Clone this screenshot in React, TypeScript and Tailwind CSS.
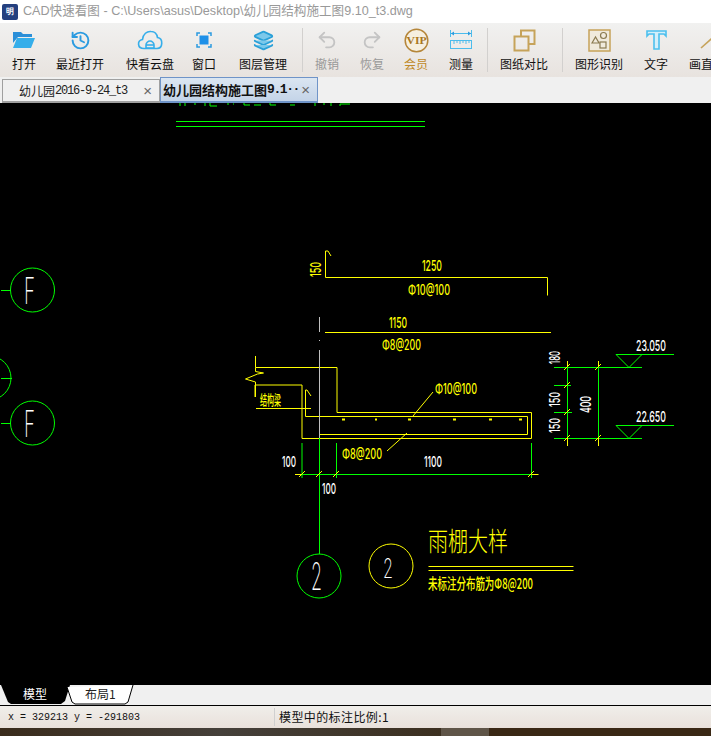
import React from 'react';
import { History, Layers, Undo2, Redo2 } from 'lucide-react';

const YELLOW = '#ffff00';
const GREEN = '#00ff00';
const GRAY = '#c0c0c0';

function FolderIcon() {
  return (
    <svg width="24" height="18" viewBox="0 0 24 18">
      <path d="M1 1h8l2 2h9v3H6L1 12z" fill="#2b8fd8" />
      <path d="M5 7h18l-4 10H1z" fill="#35aeea" />
    </svg>
  );
}

function CloudIcon() {
  return (
    <svg width="26" height="20" viewBox="0 0 26 20" fill="none" stroke="#35aeea" strokeWidth="1.6">
      <path d="M7 18.500c-7 0-7-8-1.500-9C6 4 10 1 14 1.500c4 0 6 3 6.500 6 6 1 5.500 11-.5 11z" />
      <path d="M9 18v-3c0-2 2-4 4-4s4 2 4 4v3z" />
      <path d="M9 15h8" />
    </svg>
  );
}

function WindowIcon() {
  return (
    <svg width="16" height="16" viewBox="0 0 16 16" fill="none" stroke="#2b9be0" strokeWidth="1.500">
      <path d="M1 4V1h3M12 1h3v3M15 12v3h-3M4 15H1v-3" />
      <rect x="3.500" y="3.500" width="9" height="9" fill="#1e90e8" stroke="none" />
    </svg>
  );
}

function VipIcon() {
  return (
    <svg width="25" height="25" viewBox="0 0 25 25">
      <circle cx="12.500" cy="12.500" r="11.300" fill="#f6efe0" stroke="#b5863a" strokeWidth="1.500" />
      <text x="2.500" y="16" fontSize="11" fontWeight="700" textLength="20" lengthAdjust="spacingAndGlyphs" fill="#a9771f" className="font-['Liberation_Serif',serif]">VIP</text>
    </svg>
  );
}

function RulerIcon() {
  return (
    <svg width="24" height="20" viewBox="0 0 24 20" fill="none" stroke="#4cbcec" strokeWidth="1">
      <path d="M1.500 0v7M22.500 0v7M2 3.500h20" />
      <path d="M2 3.500l3-2v4zM22 3.500l-3-2v4z" fill="#2b9be0" stroke="none" />
      <rect x="1.500" y="10.500" width="21" height="8" />
      <path d="M5 11v3M8 11v2M11 11v3M14 11v2M17 11v3M20 11v2" />
    </svg>
  );
}

function CompareIcon() {
  return (
    <svg width="23" height="23" viewBox="0 0 23 23" fill="none" stroke="#c6a35a" strokeWidth="2">
      <path d="M8 7V1.500h13.500V15H16" />
      <rect x="1.500" y="7.500" width="14" height="14" />
    </svg>
  );
}

function ShapeIcon() {
  return (
    <svg width="23" height="23" viewBox="0 0 23 23" fill="none">
      <rect x="1" y="1" width="21" height="21" fill="#f0eadc" stroke="#c6a35a" strokeWidth="1.500" />
      <path d="M4 14l3.500-6 3.500 6z" stroke="#8a7a50" strokeWidth="1.200" />
      <circle cx="15.500" cy="6.500" r="3" stroke="#8a7a50" strokeWidth="1.200" />
      <rect x="12" y="13" width="6" height="6" stroke="#8a7a50" strokeWidth="1.200" />
    </svg>
  );
}

function TextIcon() {
  return (
    <svg width="21" height="20" viewBox="0 0 21 20" fill="none" stroke="#4cc0ee" strokeWidth="1.600">
      <path d="M1 6V1h19v5l-2-2h-5v15H8V4H3z" fill="#d4effa" />
    </svg>
  );
}

function LineIcon() {
  return (
    <svg width="21" height="20" viewBox="0 0 21 20" fill="none" stroke="#c6a35a" strokeWidth="1.600" className="ml-[18px] shrink-0">
      <path d="M1 18L20 1" />
    </svg>
  );
}

type ToolItem = { label: string; icon?: React.ReactNode; box?: string; text?: string; sep?: boolean };

const tools: ToolItem[] = [
  { label: '打开', icon: <FolderIcon />, box: 'w-[40px] ml-[4px]' },
  { label: '最近打开', icon: <History size={21} color="#2b9be0" strokeWidth={2.2} />, box: 'w-[48px] ml-[12px]' },
  { label: '快看云盘', icon: <CloudIcon />, box: 'w-[48px] ml-[22px]' },
  { label: '窗口', icon: <WindowIcon />, box: 'w-[40px] ml-[10px]' },
  { label: '图层管理', icon: <Layers size={21} color="#2aa0d8" fill="#7cc8ea" strokeWidth={2} />, box: 'w-[48px] ml-[15px]' },
  { label: '', sep: true, box: 'ml-[15px]' },
  { label: '撤销', icon: <Undo2 size={22} color="#c4c4c4" strokeWidth={2} />, box: 'w-[40px] ml-[4px]', text: 'text-[#999999]' },
  { label: '恢复', icon: <Redo2 size={22} color="#c4c4c4" strokeWidth={2} />, box: 'w-[40px] ml-[5px]', text: 'text-[#999999]' },
  { label: '会员', icon: <VipIcon />, box: 'w-[40px] ml-[4px]', text: 'text-[#c08a2a]' },
  { label: '测量', icon: <RulerIcon />, box: 'w-[40px] ml-[5px]' },
  { label: '', sep: true, box: 'ml-[6px]' },
  { label: '图纸对比', icon: <CompareIcon />, box: 'w-[48px] ml-[12px]' },
  { label: '', sep: true, box: 'ml-[14px]' },
  { label: '图形识别', icon: <ShapeIcon />, box: 'w-[48px] ml-[12px]' },
  { label: '文字', icon: <TextIcon />, box: 'w-[40px] ml-[13px]' },
  { label: '画直', icon: <LineIcon />, box: 'w-[40px] ml-[5px] shrink-0' },
];

function Toolbar() {
  return (
    <div className="flex h-[54px] overflow-hidden bg-gradient-to-b from-[#f1f1f0] to-[#e8e3df]">
      {tools.map((t, i) =>
        t.sep ? (
          <div key={i} className={`w-px shrink-0 h-[44px] mt-[5px] bg-[#d2d0ce] ${t.box}`} />
        ) : (
          <div key={i} className={`shrink-0 flex flex-col items-center ${t.box}`}>
            <div className="h-[28px] mt-[3px] flex items-center justify-center">{t.icon}</div>
            <span className={`mt-[1px] text-[12px] leading-[18px] whitespace-nowrap font-['Noto_Sans_CJK_SC',sans-serif] ${t.text ?? 'text-[#111111]'}`}>
              {t.label}
            </span>
          </div>
        ),
      )}
    </div>
  );
}

function Tabs() {
  return (
    <div className="flex h-[26px] pl-[2px] bg-[#f0f0f0] items-end">
      <div className="w-[158px] h-[24px] flex items-center pl-[16px] bg-[#f0f0f0] border border-b-2 border-[#a0a0a0] text-[#222222]">
        <span className="text-[12px] font-['Noto_Sans_CJK_SC',sans-serif]">幼儿园</span>
        <span className="text-[12px] tracking-[-1.2px] font-['Liberation_Mono',monospace]">2016-9-24_t3</span>
        <span className="ml-auto mr-[7px] text-[15px] leading-none text-[#666666] font-['Liberation_Sans',sans-serif]">×</span>
      </div>
      <div className="w-[158px] h-[26px] flex items-center pl-[2px] bg-gradient-to-b from-[#dbe6f2] to-[#c4d4e8] border border-b-2 border-[#6f94c8] text-[#111111] font-bold">
        <span className="text-[13px] font-['Noto_Sans_CJK_SC',sans-serif]">幼儿园结构施工图</span>
        <span className="text-[13px] tracking-[-1.400px] font-['Liberation_Mono',monospace]">9.1··</span>
        <span className="ml-auto mr-[7px] text-[15px] leading-none font-normal text-[#666666] font-['Liberation_Sans',sans-serif]">×</span>
      </div>
    </div>
  );
}

type CadTextProps = { x: number; y: number; w: number; size: number; fill?: string; vertical?: boolean; cjk?: boolean; light?: boolean; children: string };

// narrow CAD lettering, squeezed to the width measured on the drawing
function CadText({ x, y, w, size, fill = '#ffffff', vertical, cjk, light, children }: CadTextProps) {
  const family = cjk ? "font-['Noto_Sans_CJK_SC',sans-serif]" : "font-['Inter',sans-serif]";
  return (
    <text
      x={x}
      y={y}
      fontSize={size}
      fill={fill}
      textLength={w}
      lengthAdjust="spacingAndGlyphs"
      transform={vertical ? `rotate(-90 ${x} ${y})` : undefined}
      className={`${light ? 'font-extralight' : 'font-medium'} ${family}`}
    >
      {children}
    </text>
  );
}

function Tick({ x, y, color = YELLOW }: { x: number; y: number; color?: string }) {
  return <path d={`M${x - 3} ${y + 3}L${x + 3} ${y - 3}`} stroke={color} fill="none" />;
}

function Drawing() {
  return (
    <svg viewBox="0 103 711 582" className="block w-full flex-1 min-h-0 bg-black" fill="none" strokeWidth="1">
      {/* clipped title at the top edge */}
      <path d="M180 103v3M185 103v3M195 103v2M205 103v3M210 103v3h7M227 104h2M233 104h1M244 103v2h6M254 105h7M270 103v2h6M290 105h5M315 103v3M324 103v2M331 103v3M340 106v-2h10" stroke={GREEN} />
      <path d="M176 121.500h249M176 126.500h249" stroke={GREEN} />

      {/* axis bubbles */}
      <circle cx="32.500" cy="290" r="22" stroke={GREEN} />
      <circle cx="32.500" cy="423" r="22" stroke={GREEN} />
      <circle cx="-11" cy="378" r="22" stroke={GREEN} />
      <path d="M1 290.500h10M1 423.500h10M1 378.500h11" stroke={GREEN} />
      <CadText x={24} y={304} w={11} size={37} light>F</CadText>
      <CadText x={24} y={437} w={11} size={37} light>F</CadText>

      {/* rebar callouts */}
      <path d="M331 256l-3-5h-2.500v26.500h222v18M325 332.500h226" stroke={YELLOW} />
      <CadText x={422} y={270.500} w={20} size={15} fill={YELLOW}>1250</CadText>
      <CadText x={408} y={295} w={42} size={14} fill={YELLOW}>Φ10@100</CadText>
      <CadText x={389} y={327.500} w={18} size={15} fill={YELLOW}>1150</CadText>
      <CadText x={382} y={350} w={39} size={14} fill={YELLOW}>Φ8@200</CadText>
      <CadText x={320.500} y={277} w={15} size={15} fill={YELLOW} vertical>150</CadText>

      {/* canopy section */}
      <path d="M255.500 356v11.500h81.500v45h194.500v26h-229.500v-53.500h-47v12M255.500 367.500v4l8 1.500-6 1-12 5 10 3v15" stroke={YELLOW} />
      <path d="M311 396l-4-6h-1.500v26.500h222v18h-208" stroke={YELLOW} />
      <path d="M256 408.500h55M433 392l-20 24M387 451l20-18" stroke={YELLOW} />
      <path d="M342 419.500h3M375 419.500h2M408 419.500h3M453 419.500h3M489 419.500h3M519 419.500h3" stroke={YELLOW} strokeWidth="2" />
      <CadText x={260} y={405} w={21} size={14} fill={YELLOW} cjk>结构梁</CadText>
      <CadText x={435} y={394} w={42} size={14} fill={YELLOW}>Φ10@100</CadText>
      <CadText x={342} y={459} w={40} size={14} fill={YELLOW}>Φ8@200</CadText>

      {/* centre line */}
      <path d="M319.500 317v15M319.500 340v1M319.500 350v88" stroke={GRAY} />

      {/* bottom dimensions */}
      <path d="M296 474.500h235.500M302 443v35M319.500 438v116M336.500 443v35M531.500 443v35" stroke={GREEN} />
      <path d="M295 474.500h7M531.500 474.500h7" stroke={YELLOW} />
      <Tick x={302} y={474} />
      <Tick x={319} y={474} />
      <Tick x={336} y={474} />
      <Tick x={531} y={474} />
      <CadText x={282} y={467} w={14} size={15}>100</CadText>
      <CadText x={424} y={467} w={18} size={15}>1100</CadText>
      <CadText x={322} y={494} w={14} size={15}>100</CadText>

      {/* right dimensions */}
      <path d="M554 367.500h88M554 438.500h88M554 385.500h17M554 412.500h18M567.500 367v71M598.500 367v71" stroke={GREEN} />
      <path d="M567.500 361v6M598.500 361v6M567.500 438v8M598.500 438v8" stroke={YELLOW} />
      <Tick x={567} y={367} />
      <Tick x={598} y={367} />
      <Tick x={567} y={385} />
      <Tick x={567} y={412} />
      <Tick x={567} y={438} />
      <Tick x={598} y={438} />
      <path d="M616 354.500h58M616 354.500l13 13 13-13M616 425.500h58M616 425.500l13 13 13-13" stroke={GREEN} />
      <CadText x={636} y={351} w={30} size={15}>23.050</CadText>
      <CadText x={636} y={422} w={30} size={15}>22.650</CadText>
      <CadText x={559.500} y={364} w={13} size={15} vertical>180</CadText>
      <CadText x={559.500} y={407} w={15} size={15} vertical>150</CadText>
      <CadText x={559.500} y={433} w={15} size={15} vertical>150</CadText>
      <CadText x={591} y={413} w={17} size={15} vertical>400</CadText>

      {/* detail marks and title */}
      <circle cx="319" cy="576" r="22" stroke={GREEN} />
      <CadText x={311} y={590} w={11} size={38} light>2</CadText>
      <circle cx="391" cy="566" r="22" stroke={YELLOW} />
      <CadText x={383} y={578} w={10} size={27} light>2</CadText>
      <CadText x={428} y={551} w={80} size={26} fill={YELLOW} cjk light>雨棚大样</CadText>
      <path d="M428.500 566.500h145M428.500 570.500h145" stroke={YELLOW} />
      <CadText x={428} y={589} w={105} size={15} fill={YELLOW} cjk>未标注分布筋为Φ8@200</CadText>
    </svg>
  );
}

function LayoutTabs() {
  return (
    <div className="h-[20px] shrink-0 bg-[#f0f0f0]">
      <svg width="135" height="20" viewBox="0 0 135 20">
        <path d="M1 0l7 17 3 2h50l4-3 5-16z" fill="#000000" />
        <path d="M67 2l5 15 3 2h50l3-2 5-17" fill="#ffffff" stroke="#000000" />
        <text x="23" y="14" fontSize="12" fill="#ffffff" className="font-['Noto_Sans_CJK_SC',sans-serif]">模型</text>
        <text x="85" y="14" fontSize="12" fill="#222222" className="font-['Noto_Sans_CJK_SC',sans-serif]">布局1</text>
      </svg>
    </div>
  );
}

export default function App() {
  return (
    <div className="w-[711px] h-[736px] flex flex-col overflow-hidden bg-white">
      <div className="h-[23px] shrink-0 flex items-center pl-[2px] bg-white">
        <div className="w-[16px] h-[16px] flex items-center justify-center bg-[#24407f] rounded-[2px] text-[8px] font-bold text-white font-['Liberation_Sans',sans-serif]">
          明
        </div>
        <span className="ml-[5px] text-[12.600px] whitespace-nowrap text-[#999999] font-['Liberation_Sans','Noto_Sans_CJK_SC',sans-serif]">
          CAD快速看图 - C:\Users\asus\Desktop\幼儿园结构施工图9.10_t3.dwg
        </span>
      </div>
      <Toolbar />
      <Tabs />
      <Drawing />
      <LayoutTabs />
      <div className="h-[23px] shrink-0 flex items-center border-t border-black bg-gradient-to-b from-[#f0eeea] to-[#e9e1db] text-[#111111]">
        <span className="w-[266px] ml-[8px] text-[10px] whitespace-pre font-['Liberation_Mono',monospace]">x = 329213 y = -291803</span>
        <div className="w-px h-[18px] bg-[#d0d0d0]" />
        <span className="ml-[4px] text-[12px] tracking-[0.4px] font-['Noto_Sans_CJK_SC',sans-serif]">模型中的标注比例:1</span>
      </div>
      <div className="h-[8px] shrink-0 flex">
        <div className="w-[441px] bg-gradient-to-r from-[#3a2c1c] via-[#45403a] to-[#3c3020]" />
        <div className="w-[48px] bg-[#5f5548]" />
        <div className="flex-1 bg-[#3a2815]" />
      </div>
    </div>
  );
}
